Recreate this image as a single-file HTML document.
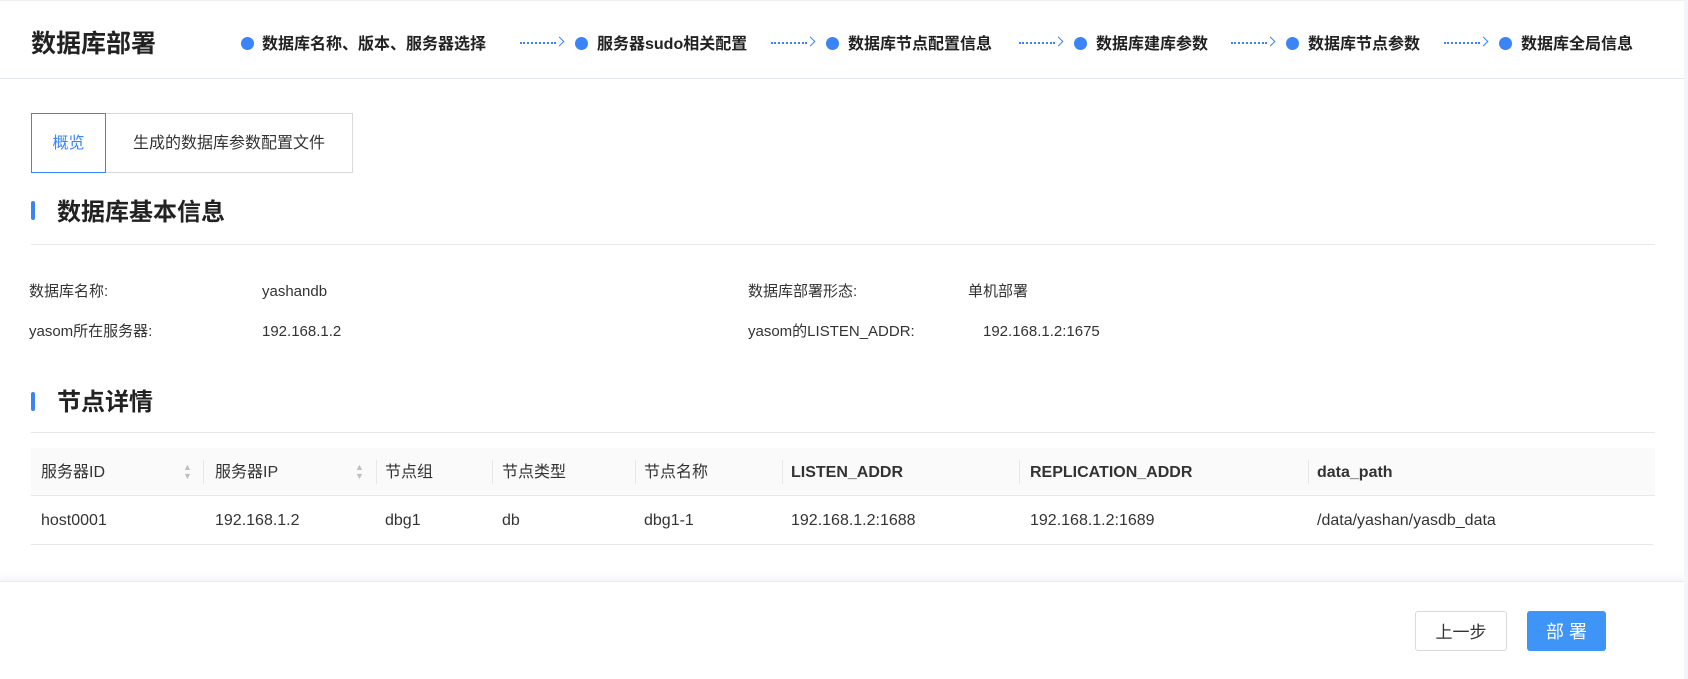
<!DOCTYPE html>
<html><head><meta charset="utf-8"><style>
*{margin:0;padding:0;box-sizing:border-box}
body{width:1688px;height:679px;overflow:hidden;background:#fff;font-family:"Liberation Sans","Noto Sans CJK SC",sans-serif;color:#333;position:relative}
.a{position:absolute;white-space:nowrap}
.hdr{position:absolute;left:0;top:0;width:1684px;height:79px;border-bottom:1px solid #e4e8ef;border-top:1px solid #eef0f4}
.title{left:31px;top:29px;font-size:25px;line-height:30px;font-weight:bold;color:#222}
.step{top:35px;font-size:16px;line-height:20px;font-weight:bold;color:#222}
.dot{width:13px;height:13px;border-radius:50%;background:#3a84f7;top:37px}
.arr{top:42px;height:0;border-top:2px dotted #3a84f7}
.chev{top:38px;width:7px;height:7px;border-top:1.5px solid #3a84f7;border-right:1.5px solid #3a84f7;transform:rotate(45deg)}
.tab{top:113px;height:60px;border:1px solid #d9d9d9;font-size:16px;line-height:60px;text-align:center}
.sec{font-size:24px;line-height:30px;font-weight:bold;color:#222}
.bar{width:4px;height:19px;background:#3a84f7;border-radius:2px}
.line{height:1px;background:#e8e8e8;left:31px;width:1624px}
.lab{font-size:15px;line-height:20px;color:#333}
.th{top:448px;height:48px;background:#fafafa;left:31px;width:1624px;border-bottom:1px solid #e8e8e8}
.hc{top:463px;font-size:16px;line-height:20px;color:#333}
.sep{top:460px;width:1px;height:24px;background:#e8e8e8}
.td{top:511px;font-size:16px;line-height:20px;color:#333}
.btn{top:611px;height:40px;font-size:17px;line-height:42px;text-align:center;border-radius:3px}
.sort{font-size:9px;color:#bfbfbf;line-height:9px;top:463px}
</style></head><body>
<div class="hdr"></div>
<div class="a title">数据库部署</div>
<div class="a dot" style="left:241px"></div><div class="a step" style="left:262px">数据库名称、版本、服务器选择</div>
<div class="a arr" style="left:520px;width:36px"></div><div class="a chev" style="left:556px"></div>
<div class="a dot" style="left:575px"></div><div class="a step" style="left:597px">服务器sudo相关配置</div>
<div class="a arr" style="left:771px;width:36px"></div><div class="a chev" style="left:807px"></div>
<div class="a dot" style="left:826px"></div><div class="a step" style="left:848px">数据库节点配置信息</div>
<div class="a arr" style="left:1019px;width:36px"></div><div class="a chev" style="left:1055px"></div>
<div class="a dot" style="left:1074px"></div><div class="a step" style="left:1096px">数据库建库参数</div>
<div class="a arr" style="left:1231px;width:36px"></div><div class="a chev" style="left:1267px"></div>
<div class="a dot" style="left:1286px"></div><div class="a step" style="left:1308px">数据库节点参数</div>
<div class="a arr" style="left:1444px;width:36px"></div><div class="a chev" style="left:1480px"></div>
<div class="a dot" style="left:1499px"></div><div class="a step" style="left:1521px">数据库全局信息</div>

<div class="a tab" style="left:105px;width:248px;color:#333">生成的数据库参数配置文件</div>
<div class="a tab" style="left:31px;width:75px;border-color:#3a84f7;color:#3a84f7">概览</div>

<div class="a bar" style="left:31px;top:201px"></div>
<div class="a sec" style="left:57px;top:198px">数据库基本信息</div>
<div class="a line" style="top:244px"></div>
<div class="a lab" style="left:29px;top:282px">数据库名称:</div>
<div class="a lab" style="left:262px;top:282px">yashandb</div>
<div class="a lab" style="left:748px;top:282px">数据库部署形态:</div>
<div class="a lab" style="left:968px;top:282px">单机部署</div>
<div class="a lab" style="left:29px;top:322px">yasom所在服务器:</div>
<div class="a lab" style="left:262px;top:322px">192.168.1.2</div>
<div class="a lab" style="left:748px;top:322px">yasom的LISTEN_ADDR:</div>
<div class="a lab" style="left:983px;top:322px">192.168.1.2:1675</div>

<div class="a bar" style="left:31px;top:392px"></div>
<div class="a sec" style="left:57px;top:388px">节点详情</div>
<div class="a line" style="top:432px"></div>

<div class="a th"></div>
<div class="a hc" style="left:41px">服务器ID</div>
<div class="a sort" style="left:183px">▲<br>▼</div>
<div class="a sep" style="left:203px"></div>
<div class="a hc" style="left:215px">服务器IP</div>
<div class="a sort" style="left:355px">▲<br>▼</div>
<div class="a sep" style="left:376px"></div>
<div class="a hc" style="left:385px">节点组</div>
<div class="a sep" style="left:492px"></div>
<div class="a hc" style="left:502px">节点类型</div>
<div class="a sep" style="left:635px"></div>
<div class="a hc" style="left:644px">节点名称</div>
<div class="a sep" style="left:782px"></div>
<div class="a hc" style="left:791px;font-weight:bold">LISTEN_ADDR</div>
<div class="a sep" style="left:1019px"></div>
<div class="a hc" style="left:1030px;font-weight:bold">REPLICATION_ADDR</div>
<div class="a sep" style="left:1308px"></div>
<div class="a hc" style="left:1317px;font-weight:bold">data_path</div>

<div class="a td" style="left:41px">host0001</div>
<div class="a td" style="left:215px">192.168.1.2</div>
<div class="a td" style="left:385px">dbg1</div>
<div class="a td" style="left:502px">db</div>
<div class="a td" style="left:644px">dbg1-1</div>
<div class="a td" style="left:791px">192.168.1.2:1688</div>
<div class="a td" style="left:1030px">192.168.1.2:1689</div>
<div class="a td" style="left:1317px">/data/yashan/yasdb_data</div>
<div class="a line" style="top:544px;width:1622px"></div>

<div class="a" style="left:0;top:581px;width:1684px;height:98px;border-top:1px solid #e6e9f5;box-shadow:0 -3px 6px rgba(200,205,230,0.25);background:#fff"></div>
<div class="a btn" style="left:1415px;width:92px;border:1px solid #d9d9d9;color:#333;background:#fff">上一步</div>
<div class="a btn" style="left:1527px;width:79px;background:#3f94f8;color:#fff;font-size:18px">部 署</div>
<div class="a" style="left:1684px;top:0;width:4px;height:679px;background:#f4f5fb"></div>
</body></html>
